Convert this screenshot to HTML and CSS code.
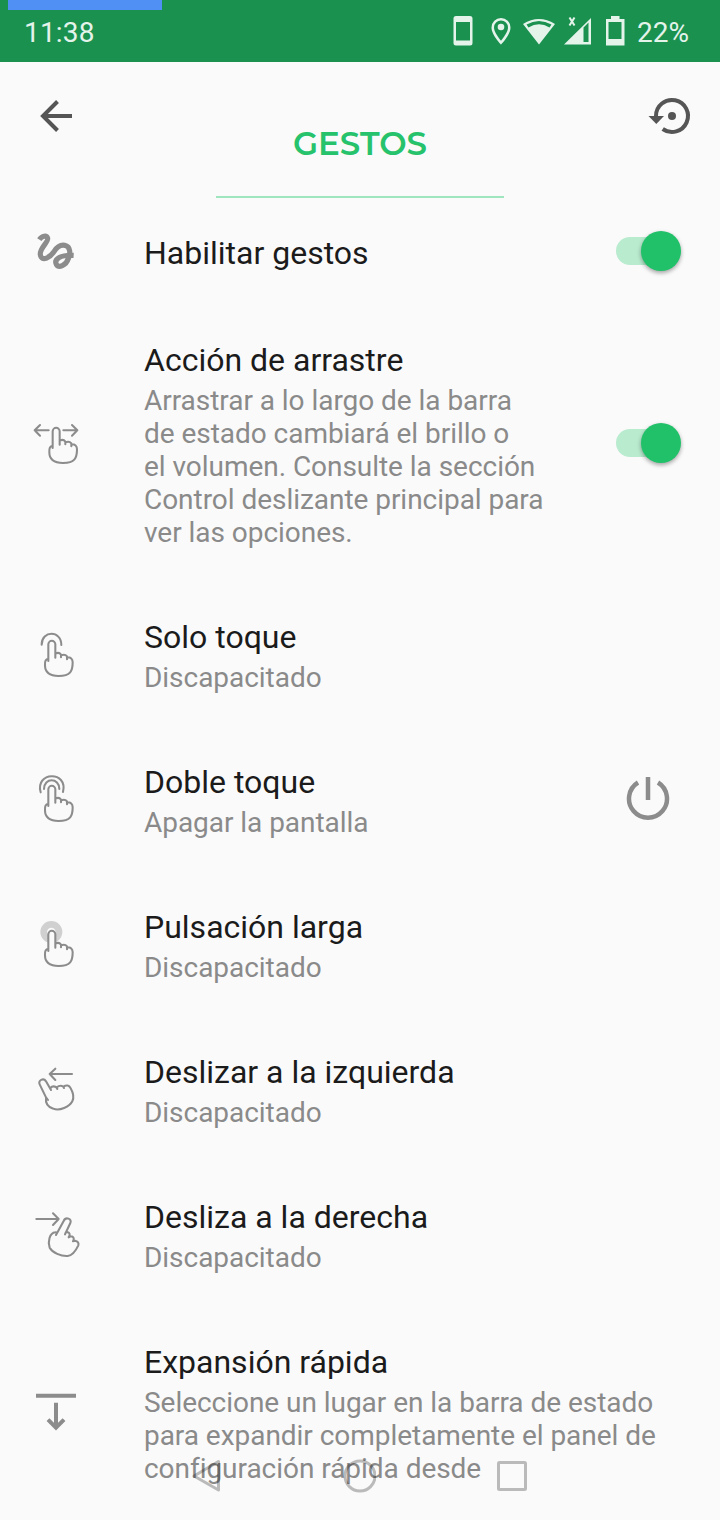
FILE: index.html
```html
<!DOCTYPE html>
<html lang="es">
<head>
    <meta charset="UTF-8">
    <meta name="viewport" content="width=device-width, initial-scale=1.0">
    <title>Gestos</title>
    <link rel="stylesheet" href="styles.css">
</head>
<body>
    <svg class="defs" aria-hidden="true">
        <symbol id="hand" viewBox="0 0 240 210">
            <path d="M85 123V73a10.500 10.500 0 0 1 21 0V113V101Q117 95 123 104V112V106Q135 101 141 109V118V112Q158 111 158 127C158 153 152 168 116 168C84 168 75 152 75 136C74 124 76 117 85 116"/>
        </symbol>
    </svg>

    <div class="screen">
        <header class="status-bar">
            <div class="progress"></div>
            <span class="clock">11:38</span>
            <svg class="status-icons" width="184" height="40" viewBox="450 10 184 40">
                <path fill-rule="evenodd" d="M456 16h14q2.500 0 2.500 2.500v24.500q0 2.500-2.500 2.500h-14q-2.500 0-2.500-2.500v-24.500q0-2.500 2.500-2.500zM456 22v18.500h14V22z"/>
                <path fill-rule="evenodd" d="M501 18a9.500 9.500 0 0 1 9.500 9.500C510.500 35 501 44.500 501 44.500S491.500 35 491.500 27.500A9.500 9.500 0 0 1 501 18zM501 20.500a7 7 0 0 0-7 7c0 4.500 4.500 10 7 13.200c2.500-3.200 7-8.700 7-13.200a7 7 0 0 0-7-7z"/>
                <circle cx="501" cy="27" r="3.300"/>
                <path fill-rule="evenodd" d="M523 24Q539 14 555 24L539 44.500zM526.500 24.500L528.500 27.500Q539 21 549.500 27.500L551.500 24.500Q539 17.500 526.500 24.500z"/>
                <path fill-rule="evenodd" d="M591 18v26.500h-27zM583.500 27.500v14.500h5V22.500z"/>
                <path class="status-x" d="M569.500 17.500l5 8M574.500 17.500l-5 8"/>
                <path fill-rule="evenodd" d="M611 16h8.500v3h5v26.500h-18.500V19h5zM608.500 22v17h13V22z"/>
            </svg>
            <span class="battery">22%</span>
        </header>

        <div class="toolbar">
            <svg width="40" height="40" viewBox="36 96 40 40">
                <path class="back-icon" d="M72 116H43M57.500 101.500L43 116l14.500 14.500"/>
            </svg>
            <h1 class="page-title">GESTOS</h1>
            <svg width="48" height="40" viewBox="646 96 48 40">
                <path class="reset-arc" d="M656 117V116a16 16 0 1 1 6.700 13"/>
                <path class="dark" d="M648.500 116h15.500l-7.700 8z"/>
                <circle class="dark" cx="672" cy="116" r="4"/>
            </svg>
        </div>

        <main class="list">
            <div class="item">
                <svg class="item-icon" viewBox="0 0 240 210">
                    <path class="scribble" d="M58 68C66 56 80 54 83 64C86 75 58 94 61 113C65 138 93 118 102 104C112 88 122 83 134 85C153 89 151 110 145 125C138 146 116 154 109 142C101 125 123 113 161 115"/>
                </svg>
                <div class="item-text">
                    <div class="item-title">Habilitar gestos</div>
                </div>
                <div class="switch"></div>
            </div>

            <div class="item">
                <svg class="item-icon" viewBox="0 0 240 210">
                    <use href="#hand" x="13" y="-6" width="240" height="210"/>
                    <path class="line" d="M86 64H44M60 48L44 64l16 16M130 64h42M156 48l16 16l-16 16"/>
                </svg>
                <div class="item-text">
                    <div class="item-title">Acción de arrastre</div>
                    <div class="item-desc">Arrastrar a lo largo de la barra<br>de estado cambiará el brillo o<br>el volumen. Consulte la sección<br>Control deslizante principal para<br>ver las opciones.</div>
                </div>
                <div class="switch"></div>
            </div>

            <div class="item">
                <svg class="item-icon" viewBox="0 0 240 210">
                    <use href="#hand" width="240" height="210"/>
                    <path class="line" d="M65 74C65 31 124 30 124 75"/>
                </svg>
                <div class="item-text">
                    <div class="item-title">Solo toque</div>
                    <div class="item-desc">Discapacitado</div>
                </div>
            </div>

            <div class="item">
                <svg class="item-icon" viewBox="0 0 240 210">
                    <use href="#hand" width="240" height="210"/>
                    <path class="line" d="M62 82C44 20 145 16 129 81M72 72C72 37 118 37 118 72"/>
                </svg>
                <div class="item-text">
                    <div class="item-title">Doble toque</div>
                    <div class="item-desc">Apagar la pantalla</div>
                </div>
                <svg class="power-icon" width="44" height="44" viewBox="0 0 44 44">
                    <path d="M22 1V24M12 6.500A19 19 0 1 0 32 6.500"/>
                </svg>
            </div>

            <div class="item">
                <svg class="item-icon" viewBox="0 0 240 210">
                    <circle class="press" cx="94" cy="66" r="23"/>
                    <use href="#hand" width="240" height="210"/>
                </svg>
                <div class="item-text">
                    <div class="item-title">Pulsación larga</div>
                    <div class="item-desc">Discapacitado</div>
                </div>
            </div>

            <div class="item">
                <svg class="item-icon" viewBox="0 0 240 210">
                    <path class="line" d="M156 57H89M106 41L89 57l17 18"/>
                    <path d="M78 127L59 88C53 75 71 68 78 79L93 105L91 99Q98 91 108 96L112 102L110 97Q120 89 129 94L132 99L130 95Q145 86 152 100C161 116 162 129 157 139C149 155 118 169 100 161C80 155 76 142 78 127L84 135"/>
                </svg>
                <div class="item-text">
                    <div class="item-title">Deslizar a la izquierda</div>
                    <div class="item-desc">Discapacitado</div>
                </div>
            </div>

            <div class="item">
                <svg class="item-icon" viewBox="0 0 240 210">
                    <path class="line" d="M49 57h67M99 40l17 17l-17 18"/>
                    <path d="M108 105L131 63C137 49 157 56 151 69L135 103L138 96Q150 96 149 106L146 112L151 109Q163 109 161 119L159 124L165 122Q178 125 175 136C168 151 158 166 143 168C122 169 98 158 89 143C83 126 88 99 106 97Q113 96 108 105"/>
                </svg>
                <div class="item-text">
                    <div class="item-title">Desliza a la derecha</div>
                    <div class="item-desc">Discapacitado</div>
                </div>
            </div>

            <div class="item">
                <svg class="item-icon" viewBox="0 0 240 210">
                    <path class="expand" d="M48 53h120M108 74v70M84 125l24 24l24-24"/>
                </svg>
                <div class="item-text">
                    <div class="item-title">Expansión rápida</div>
                    <div class="item-desc">Seleccione un lugar en la barra de estado<br>para expandir completamente el panel de<br>configuración rápida desde</div>
                </div>
            </div>
        </main>

        <!-- system navigation, drawn over the list -->
        <nav class="nav-bar">
            <svg width="32" height="34" viewBox="0 0 32 34"><path d="M28.500 2.500v28.500L4 17z"/></svg>
            <svg width="34" height="34" viewBox="0 0 34 34"><circle cx="18" cy="17" r="15"/></svg>
            <svg width="32" height="34" viewBox="0 0 32 34"><rect x="2.500" y="3.500" width="27" height="27" rx="1"/></svg>
        </nav>
    </div>
</body>
</html>
```
FILE: styles.css
```css
* {
    box-sizing: border-box;
}

body {
    margin: 0;
    background-color: #fafafa;
    font-family: Roboto, "Liberation Sans", sans-serif;
}

.defs {
    position: absolute;
    width: 0;
    height: 0;
}

.screen {
    position: relative;
    width: 720px;
    height: 1520px;
    overflow: hidden;
}

.status-bar {
    position: relative;
    display: flex;
    align-items: center;
    height: 62px;
    padding: 2px 24px 0;
    background-color: #1b9150;
    color: #e4f4eb;
    font-size: 28px;
}

.progress {
    position: absolute;
    top: 0;
    left: 8px;
    width: 154px;
    height: 10px;
    background-color: #508ff4;
}

.clock {
    width: 426px;
    letter-spacing: 0.2px;
}

.status-icons {
    flex: none;
    margin-top: -4px;
    fill: #e4f4eb;
}

.status-x {
    stroke: #e4f4eb;
    stroke-width: 2;
}

.battery {
    margin-left: 3px;
}

.toolbar {
    display: flex;
    justify-content: space-between;
    height: 137px;
    padding: 34px 26px 0 36px;
}

.page-title {
    width: 288px;
    height: 102px;
    margin: 0 0 0 -2px;
    padding-top: 28px;
    border-bottom: 2px solid #9fe5bd;
    color: #27c26c;
    font-family: Montserrat, Lato, sans-serif;
    font-size: 32.5px;
    font-weight: 600;
    line-height: 40px;
    text-align: center;
}

.back-icon,
.reset-arc {
    fill: none;
    stroke: #555;
    stroke-width: 4;
}

.dark {
    fill: #555;
}

.item {
    display: flex;
    align-items: center;
    padding: 34.5px 39px 34.5px 20px;
}

.item-icon {
    flex: none;
    width: 80px;
    height: 70px;
    margin: -18px 44px -16px 0;
    fill: #fafafa;
    stroke: #8c8c8c;
    stroke-width: 6.2;
    stroke-linecap: round;
    stroke-linejoin: round;
}

.item-icon .line {
    fill: none;
}

.item-icon .scribble {
    fill: none;
    stroke-width: 15.5;
    stroke-linecap: butt;
}

.item-icon .expand {
    fill: none;
    stroke-width: 12;
    stroke-linecap: butt;
    stroke-linejoin: miter;
}

.item-icon .press {
    stroke: #d0d0d0;
    stroke-width: 20;
}

.item-text {
    flex: 1;
    white-space: nowrap;
}

.item-title {
    color: #1b1b1b;
    font-size: 32px;
    line-height: 38px;
}

.item-desc {
    margin-top: 5px;
    color: #8a8a8a;
    font-size: 28px;
    line-height: 33px;
    letter-spacing: -0.04px;
}

.switch {
    position: relative;
    width: 65px;
    height: 40px;
    margin: -4px 0 0;
}

.switch::before {
    content: "";
    position: absolute;
    top: 6px;
    left: 0;
    width: 56px;
    height: 28px;
    border-radius: 14px;
    background-color: #b9ebcf;
}

.switch::after {
    content: "";
    position: absolute;
    top: 0;
    right: 0;
    width: 40px;
    height: 40px;
    border-radius: 50%;
    background-color: #21c16a;
    box-shadow: 0 2px 4px rgba(0, 0, 0, 0.35);
}

.power-icon {
    margin: -5px 11px 0 0;
    fill: none;
    stroke: #8c8c8c;
    stroke-width: 4.5;
}

.nav-bar {
    position: absolute;
    left: 190px;
    bottom: 27px;
    display: flex;
    justify-content: space-between;
    width: 338px;
    opacity: 0.25;
}

.nav-bar svg {
    fill: none;
    stroke: #000;
    stroke-width: 3;
    stroke-linejoin: round;
}
```
